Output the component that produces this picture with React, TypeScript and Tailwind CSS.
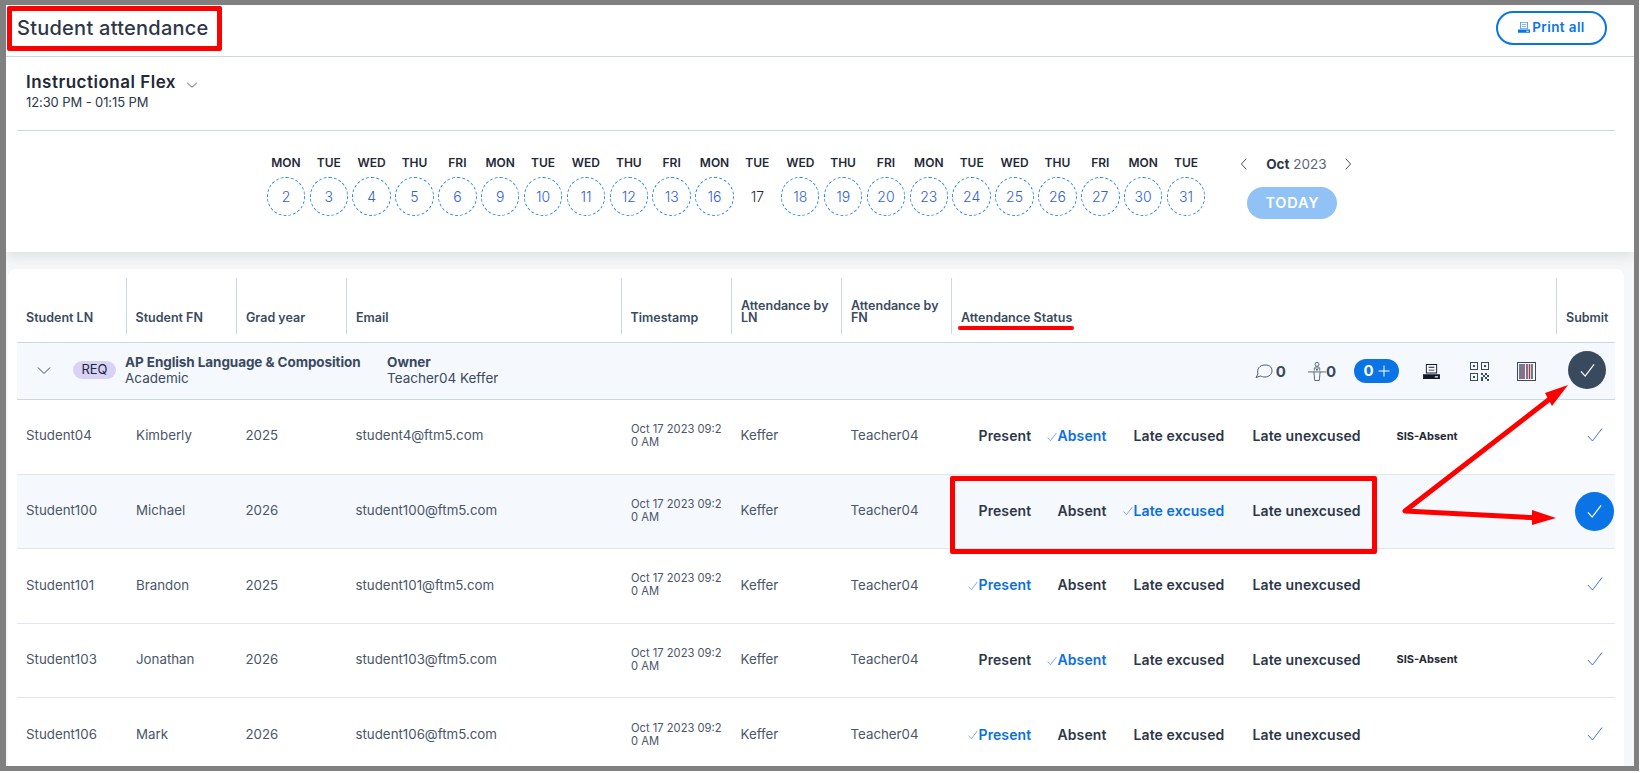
import React from "react";

const FONT = "font-['Inter','Liberation_Sans',sans-serif]";

const days: [string, string, boolean][] = [
  ["MON", "2", true], ["TUE", "3", true], ["WED", "4", true], ["THU", "5", true], ["FRI", "6", true],
  ["MON", "9", true], ["TUE", "10", true], ["WED", "11", true], ["THU", "12", true], ["FRI", "13", true],
  ["MON", "16", true], ["TUE", "17", false], ["WED", "18", true], ["THU", "19", true], ["FRI", "20", true],
  ["MON", "23", true], ["TUE", "24", true], ["WED", "25", true], ["THU", "26", true], ["FRI", "27", true],
  ["MON", "30", true], ["TUE", "31", true],
];

const students = [
  { ln: "Student04", fn: "Kimberly", y: "2025", mail: "student4@ftm5.com", st: "Absent", sis: true },
  { ln: "Student100", fn: "Michael", y: "2026", mail: "student100@ftm5.com", st: "Late excused", sis: false, hi: true },
  { ln: "Student101", fn: "Brandon", y: "2025", mail: "student101@ftm5.com", st: "Present", sis: false },
  { ln: "Student103", fn: "Jonathan", y: "2026", mail: "student103@ftm5.com", st: "Absent", sis: true },
  { ln: "Student106", fn: "Mark", y: "2026", mail: "student106@ftm5.com", st: "Present", sis: false },
];

const Check = ({ className, sw = 1 }: { className: string; sw?: number }) => (
  <svg viewBox="0 0 16 16" className={className} fill="none" stroke="currentColor" strokeWidth={sw}>
    <path d="M1 9l4.500 5L15 1.500" />
  </svg>
);

const Chevron = ({ className, d }: { className: string; d: string }) => (
  <svg viewBox="0 0 16 16" className={className} fill="none" stroke="currentColor" strokeWidth="1">
    <path d={d} />
  </svg>
);

const Printer = ({ className }: { className: string }) => (
  <svg viewBox="0 0 18 16" className={className} fill="currentColor">
    <path fillRule="evenodd" d="M3 0h12v10H3zM4 1v8h10V1zM6 3h6v1H6zM6 6h6v1H6z" />
    <path fillRule="evenodd" d="M0 11h18v5H0zM12.500 13v1.500H16V13z" />
  </svg>
);

const Status = ({ label, w, active }: { label: string; w: string; active: boolean }) => (
  <div className="flex items-center">
    <span className="flex w-4 justify-start pl-[5px] text-[#3d78d8]">
      {active && <Check className="mt-[2px] h-[10px] w-[10px]" />}
    </span>
    <span className={`${w} whitespace-nowrap text-[14px] font-semibold tracking-[0.1px] ${active ? "text-[#0a6fe0]" : "text-[#2d3748]"}`}>
      {label}
    </span>
  </div>
);

const cell = "shrink-0 pl-[9px]";

export default function App() {
  return (
    <div className={`relative h-[773px] w-[1641px] overflow-hidden bg-white ${FONT}`}>
      <div className="h-[771px] w-[1639px] overflow-hidden border-t-[5px] border-r-[5px] border-b-[5px] border-l-[6px] border-[#808080] bg-[#f6f7f9]">
        <div className="h-[247px] bg-white shadow-[0_4px_14px_rgba(0,0,0,0.10)]">
          <header className="flex h-[52px] items-center justify-between border-b border-[#cdd7e2] pr-[27px] pl-[11px]">
            <h1 className="mt-[-6px] text-[20px] font-medium tracking-[0.25px] text-[#2d3748]">Student attendance</h1>
            <button className="mt-[-6px] flex h-[34px] w-[111px] items-center justify-center gap-[2px] rounded-full border-2 border-[#0a74e6] text-[13.500px] font-semibold tracking-[0.4px] text-[#0a74e6]">
              <Printer className="h-[11px] w-[12px]" />
              Print all
            </button>
          </header>
          <div className="mx-[11px] h-[74px] w-[1598px] border-b border-[#cdd7e2] pt-[14px] pl-[9px]">
            <div className="flex items-center">
              <span className="text-[17px] leading-[22px] font-semibold tracking-[0.5px] text-[#1f2937]">Instructional Flex</span>
              <Chevron className="mt-[5px] ml-[9px] h-[14px] w-[14px] text-[#4a5568]" d="M2.500 5.500L8 10.500l5.500-5" />
            </div>
            <div className="mt-[2px] text-[13px] leading-[14px] tracking-[-0.1px] text-[#2d3748]">12:30 PM - 01:15 PM</div>
          </div>
          <div className="flex pt-[24px] pl-[258.500px]">
            <div className="flex">
              {days.map(([n, d, c], i) => (
                <div key={i} className="flex w-[42.870px] flex-col items-center">
                  <span className="text-[12px] leading-[16px] font-semibold text-[#1f2937]">{n}</span>
                  {c ? (
                    <span className="mt-[6px] flex h-[39px] w-[38.500px] items-center justify-center rounded-full border border-dashed border-[#2b8ae8] text-[14px] font-light text-[#2f62d8]">{d}</span>
                  ) : (
                    <span className="mt-[6px] flex h-[39px] w-[38.500px] items-center justify-center text-[14px] font-light text-[#1f2937]">{d}</span>
                  )}
                </div>
              ))}
            </div>
            <div className="ml-[30px] flex w-[118px] flex-col items-start pt-[1px]">
              <div className="flex w-[118px] items-center justify-between">
                <Chevron className="h-[14px] w-[14px] text-[#2d3748]" d="M10.500 2L5 8l5.500 6" />
                <span className="text-[13.500px] leading-[16px] text-[#5b6675]"><b className="font-bold text-[#2d3748]">Oct</b> 2023</span>
                <Chevron className="h-[14px] w-[14px] text-[#2d3748]" d="M5.500 2L11 8l-5.500 6" />
              </div>
              <button className="mt-[15px] ml-[10px] flex h-[32px] w-[90px] items-center justify-center rounded-full bg-[#90c2f5] text-[14.500px] font-semibold tracking-[0.8px] text-white">TODAY</button>
            </div>
          </div>
        </div>

        <div className="mt-[17px] ml-[2px] h-[500px] w-[1616px] rounded-t-[8px] bg-white pt-[9px] pl-[9px]">
          <div className="flex h-[65px] w-[1598px] items-start border-b border-[#cdd7e2] text-[12.500px] leading-[12px] font-semibold text-[#3a4a5e]">
            {[
              ["Student LN", "w-[108.500px]"], ["Student FN", "w-[110.500px] border-l"], ["Grad year", "w-[110px] border-l"],
              ["Email", "w-[274.500px] border-l"], ["Timestamp", "w-[110.500px] border-l"], ["Attendance by LN", "w-[110px] border-l"],
              ["Attendance by FN", "w-[110px] border-l"], ["Attendance Status", "w-[605px] border-l"], ["Submit", "flex-1 border-l"],
            ].map(([t, w]) => (
              <div key={t} className={`flex h-[56px] shrink-0 items-end border-[#cdd7e2] pr-[8px] pb-[10px] pl-[9px] ${w}`}>
                <span>{t}</span>
              </div>
            ))}
          </div>

          <div className="flex h-[57px] w-[1598px] items-center border-b border-[#cdd7e2] bg-[#f5f8fd] pb-[2px]">
            <Chevron className="ml-[19px] h-[16px] w-[16px] text-[#3a4a5e]" d="M2 5.500L8 11.500l6-6" />
            <span className="ml-[21px] flex h-[18px] w-[43px] items-center justify-center rounded-full bg-[#d8d2f7] text-[13px] text-[#1f2937]">REQ</span>
            <div className="ml-[9px] w-[262px] text-[13.500px] leading-[16px] text-[#3a4a5e]">
              <div className="font-bold tracking-[-0.08px] whitespace-nowrap">AP English Language &amp; Composition</div>
              <div>Academic</div>
            </div>
            <div className="text-[13.500px] leading-[16px] text-[#3a4a5e]">
              <div className="font-bold">Owner</div>
              <div className="whitespace-nowrap">Teacher04 Keffer</div>
            </div>
            <div className="mt-[2px] ml-auto flex items-center pr-[9px]">
              <svg viewBox="0 0 18 16" className="h-[16px] w-[18px] text-[#3a4a5e]" fill="none" stroke="currentColor" strokeWidth="0.9">
                <path d="M3 11C1.500 6 4.500 2 10 2s7 3 7 6-3 6-7 6c-2 0-3.500-.5-4.500-1L1 14.500 3 11z" />
              </svg>
              <span className="ml-[3px] text-[15px] leading-none font-bold text-[#3a4a5e]">0</span>
              <svg viewBox="0 0 20 22" className="ml-[22px] h-[21px] w-[18px] text-[#3a4a5e]" fill="none" stroke="currentColor" strokeWidth="0.9">
                <circle cx="10" cy="3" r="2.200" />
                <path d="M7 10V7.500C7 6.500 8 6 10 6s3 .5 3 1.500V10M8.500 7l1.500 3 1.500-3" />
                <path d="M0 11.500h20M6.500 11.500l1 9.500h5l1-9.500" />
              </svg>
              <span className="ml-[0px] text-[15px] leading-none font-bold text-[#3a4a5e]">0</span>
              <div className="ml-[18px] flex h-[24px] w-[45px] items-center justify-center gap-[4px] rounded-full bg-[#0a74e6] text-white">
                <span className="text-[15px] font-bold">0</span>
                <svg viewBox="0 0 12 12" className="h-[12px] w-[12px]" fill="none" stroke="currentColor" strokeWidth="1"><path d="M6 .5v11M.5 6h11" /></svg>
              </div>
              <Printer className="ml-[24px] h-[15px] w-[17px] text-[#111827]" />
              <svg viewBox="0 0 19 19" className="ml-[30px] h-[19px] w-[19px] text-[#3a4a5e]" fill="currentColor">
                <path fillRule="evenodd" d="M0 0h8v8H0zM1 1v6h6V1zM3 3h2v2H3zM11 0h8v8h-8zM12 1v6h6V1zM14 3h2v2h-2zM0 11h8v8H0zM1 12v6h6v-6zM3 14h2v2H3zM11 11h2v2h-2zM15 11h2v2h-2zM13 13h2v2h-2zM17 13h2v2h-2zM11 15h2v2h-2zM15 15h2v2h-2zM11 17h2v2h-2zM17 17h2v2h-2z" />
              </svg>
              <svg viewBox="0 0 19 19" className="ml-[28px] h-[19px] w-[19px]">
                <rect x=".5" y=".5" width="18" height="18" fill="none" stroke="#3a4a5e" />
                <path d="M3 2v15M5 2v15M10 2v15M15 2v15" stroke="#1f2937" strokeWidth="1.200" />
                <path d="M7 2v15" stroke="#8b2f7d" strokeWidth="1.500" />
                <path d="M12.500 2v15" stroke="#a33a3a" strokeWidth="1.500" />
              </svg>
              <div className="mt-[-2px] ml-[32px] flex h-[38px] w-[38px] items-center justify-center rounded-full bg-[#3a4a5e] text-white">
                <Check className="h-[15px] w-[15px]" sw={1.300} />
              </div>
            </div>
          </div>

          {students.map((s) => (
            <div key={s.ln} className={`flex h-[74.600px] w-[1598px] items-center border-b border-[#e2e5ec] pb-[1px] text-[13.300px] text-[#4a5568] ${s.hi ? "bg-[#f5f8fd]" : "bg-white"}`}>
              <div className="w-[110px] shrink-0 pl-[9px]">{s.ln}</div>
              <div className={`${cell} w-[109.500px]`}>{s.fn}</div>
              <div className={`${cell} w-[110px]`}>{s.y}</div>
              <div className={`${cell} w-[275.500px]`}>{s.mail}</div>
              <div className={`${cell} w-[109.500px] pr-[6px] text-[11.200px] leading-[13px] break-all`}>Oct 17 2023 09:20 AM</div>
              <div className={`${cell} w-[110px]`}>Keffer</div>
              <div className={`${cell} w-[110px]`}>Teacher04</div>
              <div className="mt-[-1px] flex w-[604.500px] shrink-0 items-center gap-[10px] pl-[11px]">
                <Status label="Present" w="w-[53px]" active={s.st === "Present"} />
                <Status label="Absent" w="w-[50px]" active={s.st === "Absent"} />
                <Status label="Late excused" w="w-[93px]" active={s.st === "Late excused"} />
                <Status label="Late unexcused" w="w-[109px]" active={false} />
                {s.sis && <span className="ml-[25px] text-[11px] font-bold whitespace-nowrap text-[#1f2937]">SIS-Absent</span>}
              </div>
              <div className="flex flex-1 justify-center pl-[18px]">
                {s.hi ? (
                  <div className="mt-[1px] flex h-[39px] w-[39px] items-center justify-center rounded-full bg-[#0a74e6] text-white">
                    <Check className="h-[15px] w-[15px]" sw={1.300} />
                  </div>
                ) : (
                  <Check className="mt-[-2px] h-[16px] w-[16px] text-[#3d78d8]" />
                )}
              </div>
            </div>
          ))}
        </div>
      </div>

      <div className="absolute top-[6px] left-[7px] h-[45px] w-[215px] rounded-[2px] border-[5px] border-[#ff0000]" />
      <div className="absolute top-[476px] left-[950px] h-[78px] w-[427px] rounded-[2px] border-[5px] border-[#ff0000]" />
      <div className="absolute top-[326px] left-[958px] h-[4px] w-[116px] rounded-full bg-[#ff0000]" />
      <svg className="pointer-events-none absolute top-0 left-0 h-[773px] w-[1641px]" viewBox="0 0 1641 773">
        <path d="M1551 398L1405 511L1540 518" fill="none" stroke="#ff0000" strokeWidth="5" strokeLinejoin="round" />
        <path d="M1568 385L1545 393L1552 406Z" fill="#ff0000" />
        <path d="M1556 518L1532 510L1532 525Z" fill="#ff0000" />
      </svg>
    </div>
  );
}
